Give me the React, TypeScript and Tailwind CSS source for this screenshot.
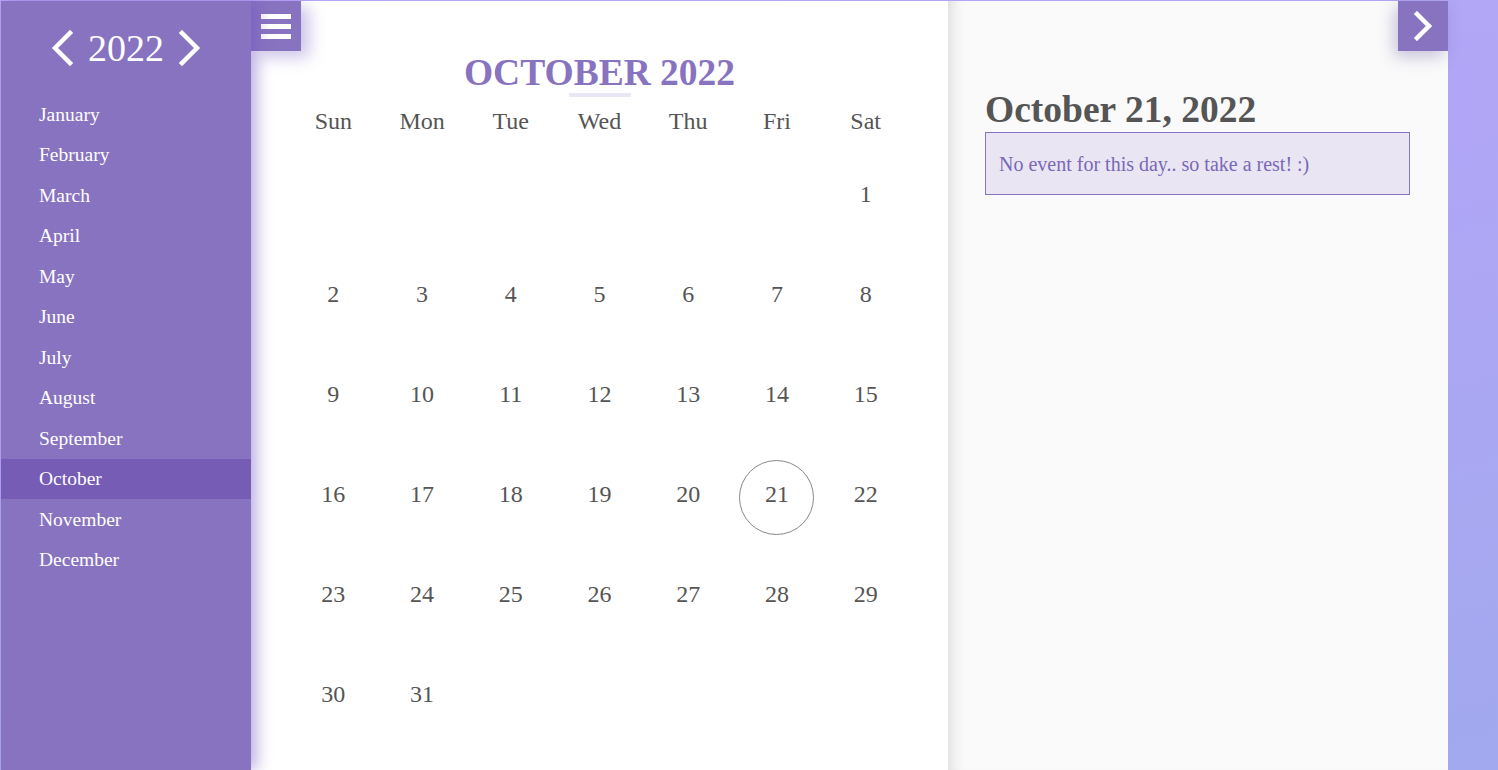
import React from "react";

const months = ["January", "February", "March", "April", "May", "June", "July", "August", "September", "October", "November", "December"];
const weekdays = ["Sun", "Mon", "Tue", "Wed", "Thu", "Fri", "Sat"];

const Chevron = ({dir}: {dir: "left" | "right"}) => (
  <svg width="24" height="36" viewBox="0 0 24 36" fill="none">
    <polyline
      points={dir === "left" ? "20,3 5,18 20,33" : "4,3 19,18 4,33"}
      stroke="white"
      strokeWidth="4.5"
      strokeLinecap="square"
      strokeLinejoin="miter"
    />
  </svg>
);

const App = () => {
  // october 2022 starts on saturday
  const cells: (number | null)[] = [...Array(6).fill(null), ...Array.from({length: 31}, (_, i) => i + 1)];
  const selected = 21;

  return (
    <div className="h-[770px] overflow-hidden pt-px pl-px bg-[linear-gradient(165deg,#b7a5f8_0%,#b0a6f5_45%,#a2a9ee_100%)] font-['Liberation_Serif',serif]">
      <div className="flex w-[1447px] h-[769px]">
        {/* Sidebar */}
        <aside className="relative z-20 w-[250px] shrink-0 bg-[#8873c0] text-white shadow-[6px_0_14px_rgba(110,80,190,0.45)]">
          <div className="h-[93px] flex items-center justify-center gap-[14px] pt-[1px]">
            <Chevron dir="left" />
            <span className="text-[38px] leading-none">2022</span>
            <Chevron dir="right" />
          </div>
          <ul>
            {months.map((m) => (
              <li key={m} className={`h-[40.5px] flex items-center pl-[38px] text-[19.5px] ${m === "October" ? "bg-[#765cb5]" : ""}`}>
                {m}
              </li>
            ))}
          </ul>
        </aside>

        {/* Calendar */}
        <main className="relative z-10 w-[697px] shrink-0 bg-white">
          <button className="absolute left-0 top-0 w-[50px] h-[50px] bg-[#8873c0] flex flex-col items-center justify-center gap-[5px] shadow-[8px_6px_16px_rgba(110,80,190,0.35)]">
            <span className="block w-[30px] h-[5px] bg-white" />
            <span className="block w-[30px] h-[5px] bg-white" />
            <span className="block w-[30px] h-[5px] bg-white" />
          </button>
          <div className="pt-[51px] flex flex-col items-center">
            <h1 className="h-[41px] text-[37.5px] leading-[42px] font-bold text-[#8873c0]">OCTOBER 2022</h1>
            <div className="w-[62px] h-[4px] bg-[#ebe6f5]" />
          </div>
          <div className="mx-auto w-[621px] mt-[4px]">
            <div className="grid grid-cols-7 h-[40px] items-center text-[24px] text-[#555]">
              {weekdays.map((d) => (
                <div key={d} className="text-center">{d}</div>
              ))}
            </div>
            <div className="grid grid-cols-7 mt-[3px]">
              {cells.map((c, i) => (
                <div key={i} className="relative h-[100px] flex items-center justify-center text-[24px] text-[#555]">
                  {c === selected && (
                    <span className="absolute left-1/2 top-[16px] -ml-[37.5px] w-[75px] h-[75px] rounded-full border border-[#888]" />
                  )}
                  {c}
                </div>
              ))}
            </div>
          </div>
        </main>

        {/* Event panel */}
        <section className="relative w-[500px] shrink-0 bg-[#fafafa] shadow-[inset_14px_0_14px_-10px_rgba(0,0,0,0.12)] pl-[37px] pr-[38px] pt-[87px]">
          <button className="absolute right-0 top-0 w-[50px] h-[50px] bg-[#8873c0] flex items-center justify-center shadow-[-4px_6px_16px_rgba(90,70,150,0.3)]">
            <svg width="20" height="30" viewBox="0 0 20 30" fill="none">
              <polyline points="4,3 16,15 4,27" stroke="white" strokeWidth="4.5" strokeLinecap="square" />
            </svg>
          </button>
          <h2 className="text-[37.5px] leading-[44px] font-bold text-[#555]">October 21, 2022</h2>
          <div className="border border-[#8873c0] bg-[#e9e5f2] h-[63px] flex items-center px-[13px] text-[20px] text-[#7a68b8]">
            No event for this day.. so take a rest! :)
          </div>
        </section>
      </div>
    </div>
  );
};

export default App;
